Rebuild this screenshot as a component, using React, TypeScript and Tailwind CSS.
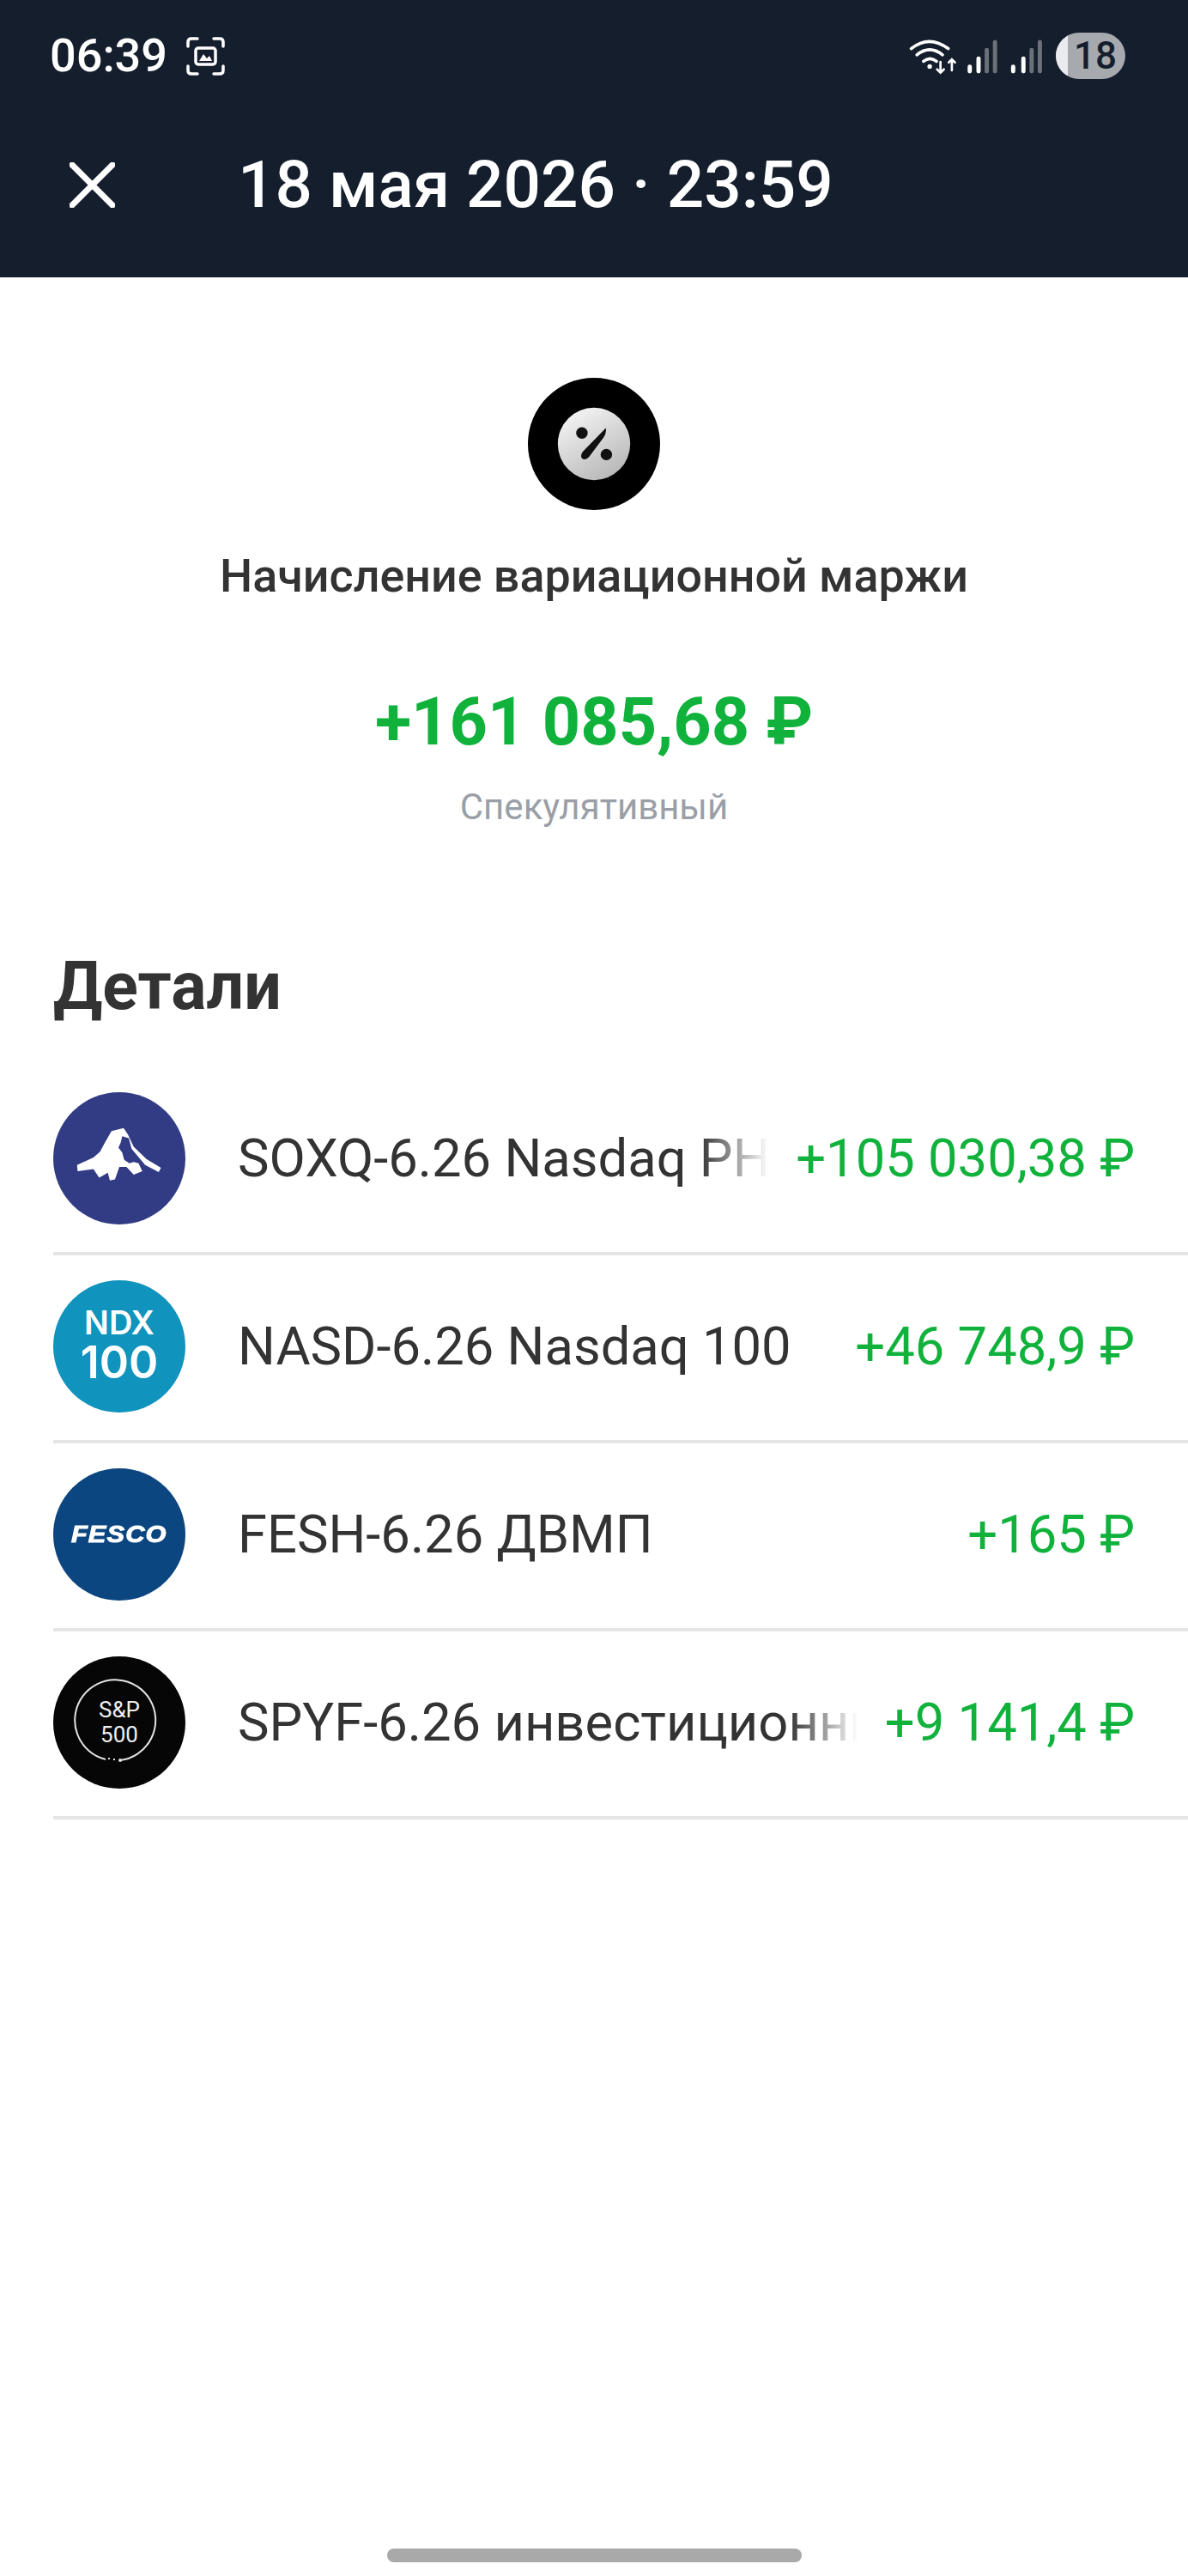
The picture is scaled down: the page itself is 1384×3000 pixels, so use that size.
const rows = [
  { name: "SOXQ-6.26 Nasdaq PHLX Semiconductor", amount: "+105 030,38 ₽", logo: "soxq", fade: true },
  { name: "NASD-6.26 Nasdaq 100", amount: "+46 748,9 ₽", logo: "nasd", fade: false },
  { name: "FESH-6.26 ДВМП", amount: "+165 ₽", logo: "fesh", fade: false },
  { name: "SPYF-6.26 инвестиционный фонд", amount: "+9 141,4 ₽", logo: "spyf", fade: true },
];

function Logo({ kind }: { kind: string }) {
  if (kind === "soxq") {
    return (
      <div className="w-[154px] h-[154px] rounded-full bg-[#323c85] shrink-0">
        <svg viewBox="65 65 460 460" className="w-full h-full" fill="#ffffff">
          <path d="M148 318 L205 292 L228 272 L245 240 L268 200 L310 190 L325 212 L345 255 L390 298 L440 328 L432 343 L385 318 L338 262 L328 225 L305 218 L300 240 L292 258 L305 275 L312 300 L330 312 L345 308 L362 312 L375 340 L345 352 L320 325 L295 325 L280 368 L262 372 L255 345 L225 362 L205 332 L150 340 Z" />
        </svg>
      </div>
    );
  }
  if (kind === "nasd") {
    return (
      <div className="w-[154px] h-[154px] rounded-full bg-[#1093bd] shrink-0 flex flex-col items-center justify-center text-white font-['Inter',sans-serif]">
        <span className="text-[38px] leading-[42px] font-semibold -mt-[3px]">NDX</span>
        <span className="text-[52px] leading-[52px] font-semibold">100</span>
      </div>
    );
  }
  if (kind === "fesh") {
    return (
      <div className="w-[154px] h-[154px] rounded-full bg-[#0c4680] shrink-0 flex items-center justify-center text-white">
        <span className="text-[28px] leading-none font-black italic tracking-[1px] font-['Liberation_Sans',sans-serif] scale-x-110 [-webkit-text-stroke:1px_white]">FESCO</span>
      </div>
    );
  }
  return (
    <div className="relative w-[154px] h-[154px] rounded-full bg-[#060606] shrink-0 flex items-center justify-center">
      <svg viewBox="0 0 154 154" className="absolute inset-0 w-full h-full" fill="none" stroke="#e4e4e4" strokeWidth="2">
        <path d="M78 121 A47 47 0 1 0 61 120" />
        <path d="M70 120 H72 M64 119 H66" />
        <circle cx="78" cy="121" r="2" fill="#e4e4e4" stroke="none" />
      </svg>
      <div className="flex flex-col items-center text-[#efefef] font-['Roboto',sans-serif] text-[26px] leading-[29px]">
        <span>S&amp;P</span>
        <span>500</span>
      </div>
    </div>
  );
}

export default function App() {
  return (
    <div className="w-[1384px] h-[3000px] bg-white flex flex-col font-['Roboto',sans-serif] overflow-hidden">
      {/* Header */}
      <header className="h-[323px] bg-[#141e2d] shrink-0 text-white">
        <div className="flex items-center justify-between pt-[38px] pl-[58px] pr-[73px] h-[92px]">
          <div className="flex items-center gap-[22px]">
            <span className="text-[54px] leading-[54px] font-medium">06:39</span>
            <svg viewBox="0 0 45 45" className="w-[45px] h-[45px]" fill="none" stroke="#fff" strokeWidth="3.5" strokeLinecap="round">
              <path d="M2 11 V6 Q2 2 6 2 H13 M32 2 H39 Q43 2 43 6 V11 M43 34 V39 Q43 43 39 43 H32 M13 43 H6 Q2 43 2 39 V34" />
              <rect x="11" y="13" width="23" height="19" rx="3" />
              <path d="M15 28 L20 20 L24 25 L27 22 L30 28 Z" fill="#fff" stroke="none" />
            </svg>
          </div>
          <div className="flex items-center gap-[13px]">
            <svg viewBox="80 70 480 130" className="w-[160px] h-[43px]" fill="none" stroke="#fff" strokeWidth="11" strokeLinecap="round">
              <path d="M92 108 Q155 58 222 108" />
              <path d="M112 130 Q157 94 202 130" />
              <path d="M135 153 Q158 134 181 153" />
              <circle cx="157" cy="171" r="8" fill="#fff" stroke="none" />
              <path d="M195 155 V193 M183 181 L195 193 L207 181" strokeWidth="8" />
              <path d="M235 185 V146 M224 157 L235 146 L246 157" strokeWidth="8" />
              <path d="M298 172 V188 M329 143 V188 M451 172 V188 M487 143 V188" strokeWidth="15" />
              <path d="M358 113 V188 M387 85 V188 M516 113 V188 M545 85 V188" stroke="#6b7179" strokeWidth="15" />
            </svg>
            <div className="w-[81px] h-[54px] rounded-full overflow-hidden bg-[#a6a9ae] flex">
              <div className="w-[14px] bg-[#e9ebee] shrink-0" />
              <span className="flex-1 text-center text-[#141e2d] text-[44px] leading-[54px] font-medium -ml-[3px]">18</span>
            </div>
          </div>
        </div>
        <div className="flex items-center pl-[81px] pt-[81px] gap-[143px]">
          <svg viewBox="0 0 53 53" className="w-[53px] h-[53px]" stroke="#fff" strokeWidth="7" strokeLinecap="square">
            <path d="M3 3 L50 50 M50 3 L3 50" />
          </svg>
          <span className="text-[76.5px] leading-[84px] font-medium whitespace-nowrap">18 мая 2026 · 23:59</span>
        </div>
      </header>

      {/* Summary */}
      <section className="flex flex-col items-center pt-[117px]">
        <svg viewBox="45 28 460 460" className="w-[154px] h-[154px]">
          <defs>
            <linearGradient id="pct" x1="0.2" y1="0" x2="0.8" y2="1">
              <stop offset="0" stopColor="#f6f6f6" />
              <stop offset="1" stopColor="#b4b4b4" />
            </linearGradient>
          </defs>
          <circle cx="275" cy="258" r="230" fill="#000" />
          <circle cx="275" cy="258" r="126" fill="url(#pct)" />
          <circle cx="233" cy="220" r="20" fill="#111" />
          <circle cx="318" cy="295" r="20" fill="#111" />
          <path d="M316 203 Q320 222 305 240 L258 303 Q245 318 233 308 Q226 298 236 285 Z" fill="#111" />
        </svg>
        <h1 className="mt-[47px] text-[53.8px] leading-[60px] font-medium text-[#333333]">Начисление вариационной маржи</h1>
        <div className="mt-[95px] text-[77.5px] leading-[90px] font-bold text-[#10b23c]">+161 085,68 ₽</div>
        <div className="mt-[30px] text-[42px] leading-[48px] text-[#9a9fa7]">Спекулятивный</div>
      </section>

      {/* Details */}
      <section className="pl-[62px] pt-[141px]">
        <h2 className="text-[77px] leading-[88px] font-bold text-[#333333]">Детали</h2>
        <div className="mt-[50px]">
          {rows.map((row) => (
            <div key={row.name} className="flex items-center gap-[61px] h-[219px] pr-[62px] border-b-[4px] border-[#e5e5e5] pb-[4px]">
              <Logo kind={row.logo} />
              <div className="flex items-center flex-1 min-w-0 gap-[32px] text-[61.5px] leading-[72px]">
                <div
                  className={
                    row.fade
                      ? "flex-1 min-w-0 overflow-hidden whitespace-nowrap text-[#333333] [mask-image:linear-gradient(to_right,#000_calc(100%-80px),transparent)]"
                      : "flex-1 min-w-0 overflow-hidden whitespace-nowrap text-[#333333]"
                  }
                >
                  {row.name}
                </div>
                <div className="shrink-0 whitespace-nowrap text-[#10b23c]">{row.amount}</div>
              </div>
            </div>
          ))}
        </div>
      </section>

      {/* Home indicator */}
      <div className="mt-auto mb-[16px] self-center w-[483px] h-[16px] rounded-full bg-[#a9a9a9]" />
    </div>
  );
}
